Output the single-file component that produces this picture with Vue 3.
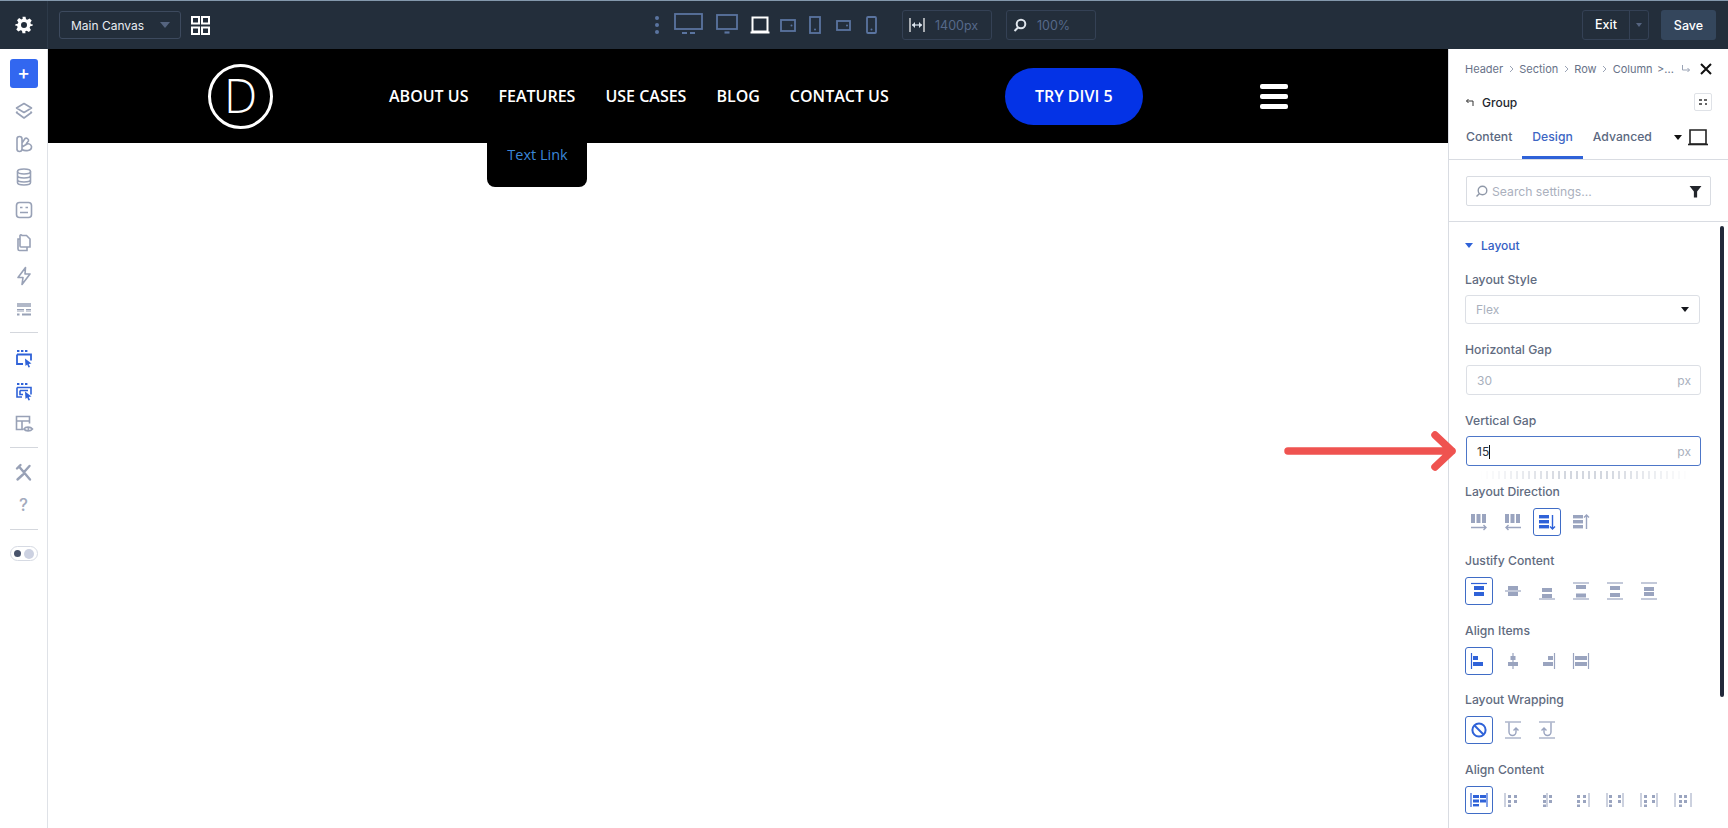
<script setup>
const b = '#2f62d8', g = '#9aa4bf';
const L = (x1, y1, x2, y2, c, w = 1) => `<line x1="${x1}" y1="${y1}" x2="${x2}" y2="${y2}" stroke="${c}" stroke-width="${w}"/>`;
const R = (x, y, w, h, c) => `<rect x="${x}" y="${y}" width="${w}" height="${h}" fill="${c}"/>`;
const A = (d, c, w = 1.4) => `<path d="${d}" fill="none" stroke="${c}" stroke-width="${w}"/>`;

const dirBars = c => R(2, 2, 4, 9, c) + R(7.5, 2, 4, 9, c) + R(13, 2, 4, 9, c);
const horBars = c => R(2, 3, 10, 3.4, c) + R(2, 8, 10, 3.4, c) + R(2, 13, 10, 3.4, c);

const sections = [
  { label: 'Layout Direction', gap: 6, icons: [
    dirBars(g) + A('M2 15.5H17M14.5 13l2.5 2.5-2.5 2.5', g),
    dirBars(g) + A('M3 15.5H18M5.5 13L3 15.5 5.5 18', g),
    horBars(b) + A('M15.5 3V17M13 14.5l2.5 2.5 2.5-2.5', b),
    horBars(g) + A('M15.5 17V3M13 5.5L15.5 3 18 5.5', g),
  ] },
  { label: 'Justify Content', gap: 6, icons: [
    L(2, 2.5, 18, 2.5, b, 1.2) + R(5, 5, 10, 4, b) + R(5, 11, 10, 4, b),
    L(2, 10, 18, 10, g, 1.2) + R(5, 5, 10, 4, g) + R(5, 11, 10, 4, g),
    L(2, 18, 18, 18, g, 1.2) + R(5, 7, 10, 4, g) + R(5, 13, 10, 4, g),
    L(2, 2, 18, 2, g, 1.2) + L(2, 18, 18, 18, g, 1.2) + R(5, 4, 10, 4, g) + R(5, 12.5, 10, 4, g),
    L(2, 2, 18, 2, g, 1.2) + L(2, 18, 18, 18, g, 1.2) + R(5, 5, 10, 4, g) + R(5, 12, 10, 4, g),
    L(2, 2, 18, 2, g, 1.2) + L(2, 18, 18, 18, g, 1.2) + R(5, 6, 10, 4, g) + R(5, 11, 10, 4, g),
  ] },
  { label: 'Align Items', gap: 6, icons: [
    L(2.5, 2, 2.5, 18, b, 1.2) + R(4, 5, 5, 4, b) + R(4, 11, 10, 4, b),
    L(10, 2, 10, 18, g, 1.2) + R(7.5, 5, 5, 4, g) + R(5, 11, 10, 4, g),
    L(17.5, 2, 17.5, 18, g, 1.2) + R(11, 5, 5, 4, g) + R(6, 11, 10, 4, g),
    L(2.5, 2, 2.5, 18, g, 1.2) + L(17.5, 2, 17.5, 18, g, 1.2) + R(4, 5, 12, 4, g) + R(4, 11, 12, 4, g),
  ] },
  { label: 'Layout Wrapping', gap: 6, icons: [
    `<circle cx="10" cy="10" r="6.6" fill="none" stroke="${b}" stroke-width="2"/>` + L(5.5, 5.5, 14.5, 14.5, b, 2),
    L(2, 2, 18, 2, g, 1.2) + L(2, 18, 18, 18, g, 1.2) + A('M6 2.5V12a3.5 3.5 0 0 0 7 0V8M10.5 10.5L13 8l2.5 2.5', g),
    L(2, 2, 18, 2, g, 1.2) + L(2, 18, 18, 18, g, 1.2) + A('M14 2.5V12a3.5 3.5 0 0 1-7 0V8M4.5 10.5L7 8l2.5 2.5', g),
  ] },
  { label: 'Align Content', gap: 6, icons: [
    L(2, 3, 2, 17, b, 1.2) + L(18, 3, 18, 17, b, 1.2) + R(4, 5, 6, 3, b) + R(11, 5, 6, 3, b) + R(4, 9.5, 6, 3, b) + R(11, 9.5, 6, 3, b) + R(4, 14, 6, 2.4, b),
    L(2, 3, 2, 17, g, 1) + R(5, 5, 3, 3, g) + R(11, 5, 3, 3, g) + R(5, 10, 3, 3, g) + R(11, 10, 3, 3, g) + R(5, 14.5, 3, 2.5, g),
    L(10, 3, 10, 17, g, 1) + R(6, 5, 3, 3, g) + R(12, 5, 3, 3, g) + R(6, 10, 3, 3, g) + R(12, 10, 3, 3, g) + R(6, 14.5, 3, 2.5, g),
    L(18, 3, 18, 17, g, 1) + R(6, 5, 3, 3, g) + R(12, 5, 3, 3, g) + R(6, 10, 3, 3, g) + R(12, 10, 3, 3, g) + R(6, 14.5, 3, 2.5, g),
    L(2, 3, 2, 17, g, 1) + L(18, 3, 18, 17, g, 1) + R(4, 5, 3, 3, g) + R(13, 5, 3, 3, g) + R(4, 10, 3, 3, g) + R(13, 10, 3, 3, g) + R(4, 14.5, 3, 2.5, g),
    L(2, 3, 2, 17, g, 1) + L(18, 3, 18, 17, g, 1) + R(5, 5, 3, 3, g) + R(13, 5, 3, 3, g) + R(5, 10, 3, 3, g) + R(13, 10, 3, 3, g) + R(5, 14.5, 3, 2.5, g),
    L(2, 3, 2, 17, g, 1) + L(18, 3, 18, 17, g, 1) + R(6, 5, 3, 3, g) + R(11, 5, 3, 3, g) + R(6, 10, 3, 3, g) + R(11, 10, 3, 3, g) + R(6, 14.5, 3, 2.5, g),
  ] },
];
const activeIndex = { 'Layout Direction': 2 };
const isActive = (s, i) => (activeIndex[s.label] ?? 0) === i;

const nav = ['ABOUT US', 'FEATURES', 'USE CASES', 'BLOG', 'CONTACT US'];
const crumbs = ['Header', 'Section', 'Row', 'Column'];

const s = '#98a1b6', bl = '#2f62d8';
const side1 = [
  `<path d="M10 2.500l7.500 4.500L10 11.500 2.500 7z M3.500 10.500L2.500 11.500 10 17l7.500-5.500-1-1" fill="none" stroke="${s}" stroke-width="1.600" stroke-linejoin="round"/>`,
  `<path d="M3 16V5a2.500 2.500 0 0 1 5 0v10a2.500 2.500 0 0 1-5 0zM8 9l3-4.500c1.500-1 4 .5 3.500 2.500L12 10M8 15.500c3 2 10 1.500 9.500-3 -.5-2.500-3-3-4.500-2.500L8 13" fill="none" stroke="${s}" stroke-width="1.600"/>`,
  `<ellipse cx="10" cy="4.500" rx="6.500" ry="2.500" fill="none" stroke="${s}" stroke-width="1.600"/><path d="M3.500 4.500v11c0 1.400 3 2.500 6.500 2.500s6.500-1.100 6.500-2.500v-11M3.500 8.500c0 1.400 3 2.500 6.500 2.500s6.500-1.100 6.500-2.500M3.500 12.500c0 1.400 3 2.500 6.500 2.500s6.500-1.100 6.500-2.500" fill="none" stroke="${s}" stroke-width="1.600"/>`,
  `<rect x="2.500" y="2.500" width="15" height="15" rx="3" fill="none" stroke="${s}" stroke-width="1.600"/><path d="M6 7.500h2.500M11.500 7.500H14M6 12.500h8" stroke="${s}" stroke-width="1.600"/>`,
  `<path d="M8 2.500h4.500l3.500 3.500v8H7a1 1 0 0 1-1-1V3.500a1 1 0 0 1 2-1zM6 6H4v10a1.500 1.500 0 0 0 1.500 1.500H13V14" fill="none" stroke="${s}" stroke-width="1.600"/>`,
  `<path d="M11.500 1.500L4 11.500h5L8 18.500l8-10.500h-5z" fill="none" stroke="${s}" stroke-width="1.600" stroke-linejoin="round"/>`,
  `<path d="M3 5h14M3 7h14" stroke="${s}" stroke-width="1.300"/><path d="M3 10.500h7M12 10.500h5M3 12h7M12 12h5" stroke="${s}" stroke-width="1"/><path d="M3 15.500h2.500M8 15.500h9" stroke="${s}" stroke-width="2"/>`,
];
const cursorBox = `<path d="M3 6.500h14v6M3 6.500V16h6" fill="none" stroke="${bl}" stroke-width="1.800"/><path d="M3 3h2.400M7 3h2.400M11 3h2.400" stroke="${bl}" stroke-width="2"/><path d="M11 10.500l6.500 5-2.800.4 1.300 3-1.500.6-1.300-3L11.500 18z" fill="${bl}"/>`;
const cursorBox2 = `<path d="M3 6.500h14v7M3 6.500V16h5M6 9.500h8M6 9.500v4h3" fill="none" stroke="${bl}" stroke-width="1.600"/><path d="M3 3h2.400M7 3h2.400M11 3h2.400" stroke="${bl}" stroke-width="2"/><path d="M11 10.500l6.500 5-2.800.4 1.300 3-1.500.6-1.300-3L11.500 18z" fill="${bl}"/>`;
const side2 = [
  cursorBox, cursorBox2,
  `<path d="M9.500 15.500H2.500v-13h13v7M2.500 7h13M8 7v8.500" fill="none" stroke="${s}" stroke-width="1.600"/><path d="M10 15c1.500-2.500 6.500-2.500 8.500 0-2 2.500-7 2.500-8.500 0z" fill="none" stroke="${s}" stroke-width="1.600"/><circle cx="14.300" cy="15" r="1" fill="${s}"/>`,
];
const side3 = [
  `<path d="M5 3.500l11 13M3 5.500L6.500 2M15.500 3L11 8M3.500 16.500L9 11.500" fill="none" stroke="${s}" stroke-width="2.400" stroke-linecap="round"/>`,
];

const dev = '#5a74a0';
const devices = [
  { w: 29, h: 24, m: 13, svg: `<rect x="1" y="1" width="27" height="15" fill="none" stroke="${dev}" stroke-width="1.800"/><path d="M8 20h5M16 20h5" stroke="${dev}" stroke-width="2.200"/>`, vb: '0 0 29 24' },
  { w: 22, h: 22, m: 12, svg: `<rect x="1" y="1" width="20" height="14" fill="none" stroke="${dev}" stroke-width="1.800"/><path d="M8.500 18.500h5" stroke="${dev}" stroke-width="2.200"/>`, vb: '0 0 22 22' },
  { w: 20, h: 19, m: 10, svg: `<path d="M2.500 1.500h15v14h-15z" fill="none" stroke="#fff" stroke-width="2"/><path d="M0.500 16.500h19" stroke="#fff" stroke-width="2"/>`, vb: '0 0 20 19' },
  { w: 16, h: 15, m: 13, svg: `<rect x="1" y="2" width="14" height="11" fill="none" stroke="${dev}" stroke-width="1.800"/><circle cx="11.500" cy="7.500" r="1" fill="${dev}"/>`, vb: '0 0 16 15' },
  { w: 12, h: 18, m: 15, svg: `<rect x="1" y="1" width="10" height="16" fill="none" stroke="${dev}" stroke-width="1.800"/><circle cx="6" cy="13.500" r="1" fill="${dev}"/>`, vb: '0 0 12 18' },
  { w: 15, h: 13, m: 15, svg: `<rect x="1" y="2" width="13" height="9" fill="none" stroke="${dev}" stroke-width="1.800"/><circle cx="11" cy="6.500" r="1" fill="${dev}"/>`, vb: '0 0 15 13' },
  { w: 11, h: 18, m: 0, svg: `<rect x="1" y="1" width="9" height="16" rx="1" fill="none" stroke="${dev}" stroke-width="1.800"/><circle cx="5.500" cy="13.500" r="1" fill="${dev}"/>`, vb: '0 0 11 18' },
];
</script>

<template>
  <div class="app">
    <header class="topbar">
      <div class="gearcell">
        <svg width="18" height="18" viewBox="0 0 24 24"><path fill="#fff" fill-rule="evenodd" d="M10 1h4l.7 3.300 1.900.8 2.900-1.800 2.800 2.800-1.800 2.900.8 1.900L23.500 11v2l-3.200.7-.8 1.900 1.800 2.900-2.800 2.800-2.900-1.800-1.900.8L14 23h-4l-.7-3.300-1.900-.8-2.900 1.800-2.800-2.800 1.800-2.900-.8-1.900L.5 13v-2l3.200-.7.8-1.900-1.800-2.900 2.800-2.800 2.900 1.800 1.900-.8zM12 8a4 4 0 1 0 0 8 4 4 0 0 0 0-8z"/></svg>
      </div>
      <div class="tools-left">
        <div class="canvas-select">
          <span>Main Canvas</span>
          <i class="tri"></i>
        </div>
        <svg class="gridicon" width="19" height="19" viewBox="0 0 19 19"><g fill="none" stroke="#fff" stroke-width="2"><rect x="1" y="1" width="7" height="6.500"/><rect x="11" y="1" width="7" height="6.500"/><rect x="1" y="11.500" width="7" height="6.500"/><rect x="11" y="11.500" width="7" height="6.500"/></g></svg>
      </div>
      <div class="tools-mid">
        <span class="kebab"><i></i><i></i><i></i></span>
        <svg v-for="(d, i) in devices" :key="i" class="device" :style="{ marginRight: d.m + 'px' }" :width="d.w" :height="d.h" :viewBox="d.vb" v-html="d.svg"></svg>
        <div class="numbox first">
          <svg width="16" height="14" viewBox="0 0 16 14"><path d="M1 0v14M15 0v14" stroke="#fff" stroke-width="1.200"/><path d="M3 7h10" stroke="#c5cfdc" stroke-width="1.400"/><path d="M3 7l3-3v6zM13 7l-3-3v6z" fill="#dbe3ec"/></svg>
          <span>1400px</span>
        </div>
        <div class="numbox second">
          <svg width="14" height="14" viewBox="0 0 14 14"><circle cx="8" cy="6" r="4.300" fill="none" stroke="#dfe5ec" stroke-width="2"/><path d="M5 9.500L1.500 13" stroke="#dfe5ec" stroke-width="2"/></svg>
          <span>100%</span>
        </div>
      </div>
      <div class="tools-right">
        <div class="exit">
          <span class="exit-label">Exit</span>
          <span class="exit-caret"><i class="tri small"></i></span>
        </div>
        <div class="save">Save</div>
      </div>
    </header>

    <div class="main">
      <aside class="sidebar">
        <div class="plus">+</div>
        <svg v-for="(ic, i) in side1" :key="'a' + i" class="sicon" width="20" height="20" viewBox="0 0 20 20" v-html="ic"></svg>
        <hr class="sep" />
        <svg v-for="(ic, i) in side2" :key="'b' + i" class="sicon" width="20" height="20" viewBox="0 0 20 20" v-html="ic"></svg>
        <hr class="sep" />
        <svg v-for="(ic, i) in side3" :key="'c' + i" class="sicon" width="20" height="20" viewBox="0 0 20 20" v-html="ic"></svg>
        <span class="question">?</span>
        <hr class="sep" />
        <div class="toggle"><i class="dot-on"></i><i class="dot-off"></i></div>
      </aside>

      <section class="canvas">
        <div class="site-header">
          <div class="logo"><span>D</span></div>
          <nav class="site-nav">
            <a v-for="n in nav" :key="n" class="nav-item">
              {{ n }}
              <div v-if="n === 'FEATURES'" class="submenu">Text Link</div>
            </a>
          </nav>
          <div class="cta">TRY DIVI 5</div>
          <div class="burger"><i></i><i></i><i></i></div>
        </div>
      </section>

      <aside class="panel">
        <div class="crumbs">
          <template v-for="(c, i) in crumbs" :key="c">
            <span>{{ c }}</span>
            <svg v-if="i < 3" width="5" height="8" viewBox="0 0 5 8"><path d="M1 1l3 3-3 3" fill="none" stroke="#9aa3b5" stroke-width="1"/></svg>
          </template>
          <span class="more">&gt;...</span>
          <svg class="branch" width="10" height="10" viewBox="0 0 10 10"><path d="M1.500 1v5h7M6.500 4l2 2-2 2" fill="none" stroke="#9aa3b5" stroke-width="1"/></svg>
          <svg class="close" width="12" height="12" viewBox="0 0 12 12"><path d="M1 1l10 10M11 1L1 11" stroke="#111" stroke-width="2"/></svg>
        </div>
        <div class="grouprow">
          <svg width="9" height="9" viewBox="0 0 9 9"><path d="M8 8V3H1.500M3.500 1L1.500 3l2 2" fill="none" stroke="#333" stroke-width="1"/></svg>
          <span class="group-title">Group</span>
          <div class="presets"><svg width="10" height="8" viewBox="0 0 10 8"><path d="M1 2h3M6 2h3M1 6h3M7 6h2" stroke="#333" stroke-width="1.500"/></svg></div>
        </div>
        <div class="tabs">
          <span class="tab">Content</span>
          <span class="tab active">Design</span>
          <span class="tab">Advanced</span>
          <i class="tab-caret"></i>
          <svg class="tab-view" width="20" height="17" viewBox="0 0 20 17"><path d="M2 1h16v14H2z" fill="none" stroke="#222" stroke-width="1.600"/><path d="M0 15.500h20" stroke="#222" stroke-width="1.600"/></svg>
        </div>
        <div class="searchwrap">
          <div class="search">
            <svg width="13" height="13" viewBox="0 0 13 13"><circle cx="7.500" cy="5.500" r="4.300" fill="none" stroke="#8f98a8" stroke-width="1.400"/><path d="M4.500 8.500L1.500 11.500" stroke="#8f98a8" stroke-width="1.400"/></svg>
            <span class="ph">Search settings...</span>
            <svg class="funnel" width="13" height="13" viewBox="0 0 12 12"><path d="M0.500 1h11L7.500 6v5.500h-3V6z" fill="#22252b"/></svg>
          </div>
        </div>
        <div class="scroll">
          <div class="thumb"></div>
          <div class="sec-head"><i class="sec-tri"></i><span>Layout</span></div>

          <label class="lbl first-lbl">Layout Style</label>
          <div class="field select"><span>Flex</span><i class="sel-tri"></i></div>

          <label class="lbl">Horizontal Gap</label>
          <div class="field indent"><span>30</span><em>px</em></div>

          <label class="lbl">Vertical Gap</label>
          <div class="field indent focus"><span class="val">15<i class="caret"></i></span><em>px</em></div>
          <div class="ruler"></div>

          <div v-for="sec in sections" :key="sec.label" class="iconsec">
            <label class="lbl tight">{{ sec.label }}</label>
            <div class="iconrow">
              <span v-for="(ic, i) in sec.icons" :key="i" class="ibtn" :class="{ on: isActive(sec, i) }">
                <svg width="20" height="20" viewBox="0 0 20 20" v-html="ic"></svg>
              </span>
            </div>
          </div>
        </div>
      </aside>

      <svg class="arrow" width="176" height="40" viewBox="0 0 176 40">
        <path d="M4 20H168M151 4l17 16-17 16" fill="none" stroke="#ef5350" stroke-width="7.500" stroke-linecap="round" stroke-linejoin="round"/>
      </svg>
    </div>
  </div>
</template>

<style>
html, body { margin: 0; padding: 0; background: #fff; }
</style>

<style scoped>
.app { width: 1728px; height: 828px; overflow: hidden; position: relative; font-family: Inter, "Liberation Sans", sans-serif; display: flex; flex-direction: column; }

/* top bar */
.topbar { height: 49px; box-sizing: border-box; flex: none; background: #232e3b; border-top: 1px solid #8398ac; display: flex; align-items: center; color: #fff; position: relative; }
.gearcell { width: 48px; height: 48px; display: flex; align-items: center; justify-content: center; border-right: 1px solid #2d3a49; box-sizing: border-box; flex: none; }
.tools-left { display: flex; align-items: center; margin-left: 11px; width: 151px; flex: none; }
.canvas-select { width: 122px; height: 28px; box-sizing: border-box; border: 1px solid #3d4a5e; border-radius: 3px; display: flex; align-items: center; justify-content: space-between; padding: 0 10px 0 11px; font-size: 12px; color: #e8ecf1; }
.tri { width: 0; height: 0; border-left: 5px solid transparent; border-right: 5px solid transparent; border-top: 6px solid #55647f; display: block; }
.tri.small { border-left-width: 3.500px; border-right-width: 3.500px; border-top-width: 4px; }
.gridicon { margin-left: 10px; }
.tools-mid { display: flex; align-items: center; margin-left: 445px; flex: none; }
.kebab { display: flex; flex-direction: column; gap: 3px; margin-right: 15px; }
.kebab i { width: 4px; height: 4px; border-radius: 50%; background: #5a74a0; display: block; }
.device { flex: none; }
.numbox { height: 30px; width: 90px; box-sizing: border-box; border: 1px solid #344155; border-radius: 3px; display: flex; align-items: center; gap: 10px; padding-left: 6px; font-size: 12.500px; color: #56698a; }
.numbox.first { margin-left: 25px; }
.numbox.second { margin-left: 14px; }
.tools-right { margin-left: auto; margin-right: 12px; display: flex; align-items: center; gap: 12px; }
.exit { width: 67px; height: 30px; box-sizing: border-box; border: 1px solid #344155; border-radius: 3px; display: flex; align-items: center; font-size: 12.500px; font-weight: 500; }
.exit-label { width: 46px; text-align: center; border-right: 1px solid #344155; line-height: 28px; }
.exit-caret { flex: 1; display: flex; justify-content: center; }
.save { width: 55px; height: 30px; border-radius: 3px; background: #34465c; display: flex; align-items: center; justify-content: center; font-size: 12.500px; font-weight: 500; }

.main { flex: 1; display: flex; min-height: 0; position: relative; }

/* sidebar */
.sidebar { width: 48px; flex: none; box-sizing: border-box; border-right: 1px solid #dfe2e7; display: flex; flex-direction: column; align-items: center; padding-top: 10px; background: #fff; }
.plus { width: 28px; height: 29px; background: #3267f0; border-radius: 3px; color: #fff; font-size: 19px; line-height: 28px; text-align: center; font-weight: 500; flex: none; }
.sicon { margin-top: 13px; flex: none; }
.sep { width: 28px; height: 1px; border: 0; background: #d4d7dd; margin: 13px 0 2px; }
.question { margin-top: 11px; height: 22px; font-size: 17px; font-weight: 500; color: #a2aabd; line-height: 22px; }
.toggle { width: 28px; height: 15px; border: 1px solid #d6dae3; border-radius: 9px; margin-top: 14px; display: flex; align-items: center; justify-content: space-between; padding: 0 3px; box-sizing: border-box; }
.dot-on { width: 7px; height: 7px; background: #48536b; border-radius: 50%; }
.dot-off { width: 10px; height: 10px; background: #ccd1e1; border-radius: 50%; }

/* canvas */
.canvas { flex: 1; position: relative; background: #fff; min-width: 0; }
.site-header { height: 94px; background: #000; display: flex; align-items: center; color: #fff; font-family: "Open Sans", "Liberation Sans", sans-serif; }
.logo { width: 65px; height: 65px; box-sizing: border-box; border: 3px solid #fff; border-radius: 50%; margin-left: 160px; display: flex; align-items: center; justify-content: center; font-size: 47px; font-weight: 300; font-family: "Open Sans", sans-serif; flex: none; }
.logo span { line-height: 1; margin-top: -2px; }
.site-nav { display: flex; gap: 30px; margin-left: 116px; flex: none; }
.nav-item { position: relative; font-size: 16px; font-weight: 600; line-height: 24px; white-space: nowrap; }
.submenu { position: absolute; top: 45px; left: -11px; width: 100px; height: 58px; box-sizing: border-box; background: #000; border-radius: 0 0 8px 8px; color: #3b86d8; font-size: 14.500px; font-weight: 400; text-align: center; line-height: 22px; padding-top: 15px; }
.cta { margin-left: 116px; width: 138px; height: 57px; border-radius: 29px; background: #0433e6; font-size: 16px; font-weight: 600; display: flex; align-items: center; justify-content: center; flex: none; }
.burger { margin-left: 117px; width: 28px; display: flex; flex-direction: column; gap: 5px; flex: none; }
.burger i { height: 5px; border-radius: 2px; background: #fff; display: block; }

/* panel */
.panel { width: 280px; flex: none; box-sizing: border-box; border-left: 1px solid #d9dce2; background: #fff; display: flex; flex-direction: column; position: relative; }
.crumbs { display: flex; align-items: center; height: 14px; margin-top: 13px; padding: 0 16px; font-size: 11px; color: #687288; gap: 5.500px; }
.more { margin-left: -1px; }
.branch { margin-left: auto; }
.close { margin-left: 4px; }
.grouprow { display: flex; align-items: center; height: 20px; margin-top: 16px; padding: 0 16px; font-size: 12px; font-weight: 500; color: #23272f; gap: 8px; }
.group-title { flex: 1; }
.presets { width: 18px; height: 18px; border: 1px solid #dfe2e7; border-radius: 2px; display: flex; align-items: center; justify-content: center; box-sizing: border-box; }
.tabs { display: flex; align-items: center; height: 41px; box-sizing: border-box; padding-bottom: 4px; margin-top: 7px; border-bottom: 1px solid #d9dce2; padding-left: 17px; font-size: 12.200px; font-weight: 500; color: #5b6880; position: relative; flex: none; }
.tab { margin-right: 20px; line-height: 36px; }
.tab.active { color: #3d66c4; position: relative; }
.tab.active::after { content: ""; position: absolute; left: -10px; right: -10px; bottom: -4px; height: 3px; background: #2f62d8; }
.tab-caret { width: 0; height: 0; border-left: 4px solid transparent; border-right: 4px solid transparent; border-top: 5px solid #111; margin-left: 2px; display: block; }
.tab-view { margin-left: 6px; }
.searchwrap { height: 62px; box-sizing: border-box; padding: 16px 17px 0 17px; border-bottom: 1px solid #d9dce2; flex: none; }
.search { width: 245px; height: 30px; box-sizing: border-box; border: 1px solid #d9dce2; border-radius: 2px; display: flex; align-items: center; padding: 0 8px; gap: 4px; font-size: 12.200px; color: #aab0bd; }
.ph { flex: 1; }
.scroll { position: relative; padding: 14px 0 0 16px; flex: 1; min-height: 0; overflow: hidden; }
.thumb { position: absolute; right: 4px; top: 4px; width: 4px; height: 471px; border-radius: 2px; background: #22293a; }
.sec-head { display: flex; align-items: center; gap: 8px; height: 18px; font-size: 12px; font-weight: 500; color: #3460c4; }
.sec-tri { width: 0; height: 0; border-left: 4px solid transparent; border-right: 4px solid transparent; border-top: 5px solid #2f62d8; display: block; }
.lbl { display: block; font-size: 12.200px; font-weight: 500; color: #616b80; line-height: 16px; margin-top: 18px; margin-bottom: 7px; white-space: nowrap; }
.lbl.first-lbl { margin-top: 18px; }
.lbl.tight { margin: 0 0 8px; }
.field { width: 235px; height: 29px; box-sizing: border-box; border: 1px solid #dcdfe5; border-radius: 3px; display: flex; align-items: center; justify-content: space-between; padding: 0 9px 0 10px; font-size: 12px; color: #a9b0bd; }
.field.indent { margin-left: 1px; height: 30px; }
.field em { font-style: normal; color: #a9b0bd; }
.field.focus { border-color: #4d76c8; }
.val { color: #2c3340; position: relative; }
.caret { display: inline-block; width: 1px; height: 14px; background: #111; vertical-align: -3px; }
.sel-tri { width: 0; height: 0; border-left: 4.500px solid transparent; border-right: 4.500px solid transparent; border-top: 5px solid #15171c; display: block; margin-right: 1px; }
.ruler { width: 210px; height: 8px; margin: 5px 0 0 15px; background: repeating-linear-gradient(90deg, #d3d7df 0 2px, transparent 2px 6px); -webkit-mask-image: linear-gradient(90deg, transparent, #000 40%, #000 60%, transparent); mask-image: linear-gradient(90deg, transparent, #000 40%, #000 60%, transparent); }
.iconsec { margin-top: 8px; height: 61.400px; }
.ruler + .iconsec { margin-top: 5px; }
.iconrow { display: flex; gap: 6px; }
.ibtn { width: 28px; height: 28px; box-sizing: border-box; border: 1px solid transparent; border-radius: 3px; display: flex; align-items: center; justify-content: center; flex: none; }
.ibtn.on { border-color: #3f6cc6; }

.arrow { position: absolute; left: 1284px; top: 382px; }
</style>
